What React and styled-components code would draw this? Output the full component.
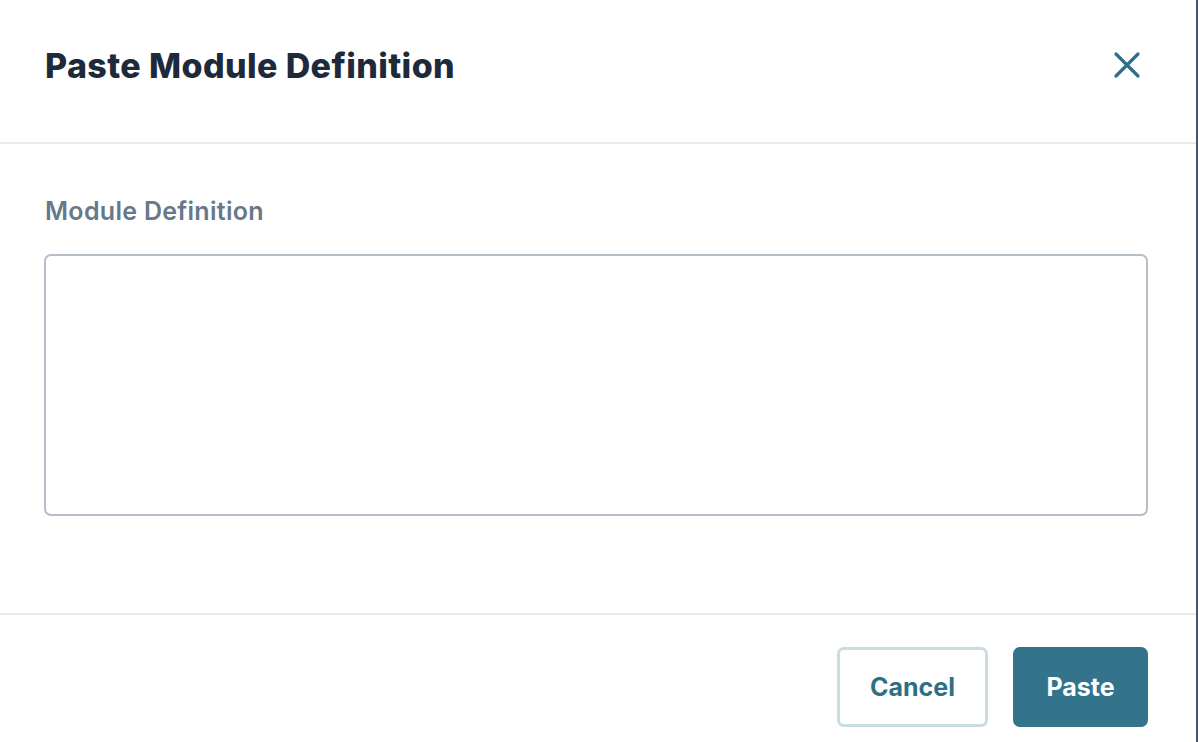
import React from "react";
import styled, { createGlobalStyle } from "styled-components";

const Global = createGlobalStyle`
  html, body { margin: 0; padding: 0; height: 100%; }
  body { background: #4a5566; font-family: "Inter", "Liberation Sans", sans-serif; }
  #root { height: 100%; }
`;

const Modal = styled.div`
  width: 1196px;
  height: 742px;
  background: #ffffff;
  display: flex;
  flex-direction: column;
  box-sizing: border-box;
`;

const Header = styled.header`
  height: 144px;
  flex: none;
  box-sizing: border-box;
  border-bottom: 2px solid #e8eaed;
  display: flex;
  align-items: center;
  justify-content: space-between;
  padding: 0 53px 12px 45px;
`;

const Title = styled.h1`
  margin: 0;
  font-family: "Inter", sans-serif;
  font-weight: 800;
  font-size: 34px;
  letter-spacing: 0.4px;
  color: #1e2a3a;
`;

const CloseButton = styled.button`
  border: none;
  background: none;
  padding: 0;
  width: 32px;
  height: 32px;
  display: flex;
  align-items: center;
  justify-content: center;
  color: #2f6f89;
  cursor: pointer;
`;

const Body = styled.div`
  flex: 1;
  padding: 52px 48px 0 44px;
  box-sizing: border-box;
  border-bottom: 2px solid #e8eaed;
  display: flex;
  flex-direction: column;
`;

const Label = styled.label`
  font-family: "Inter", sans-serif;
  font-weight: 600;
  font-size: 25px;
  letter-spacing: 0.3px;
  color: #67788a;
  margin-left: 1px;
  margin-bottom: 28px;
`;

const TextArea = styled.textarea`
  width: 100%;
  height: 262px;
  box-sizing: border-box;
  border: 2px solid #b4bec8;
  border-radius: 7px;
  resize: none;
  outline: none;
  font-family: "Inter", sans-serif;
  font-size: 20px;
  padding: 12px 16px;
`;

const Footer = styled.footer`
  height: 127px;
  flex: none;
  box-sizing: border-box;
  display: flex;
  justify-content: flex-end;
  align-items: flex-start;
  gap: 25px;
  padding: 32px 48px 0 0;
`;

const Button = styled.button`
  height: 80px;
  padding: 0 ${p => (p.primary ? "32px" : "30px")};
  min-width: ${p => (p.primary ? "135px" : "150px")};
  box-sizing: border-box;
  border-radius: 7px;
  font-family: "Inter", sans-serif;
  font-weight: 700;
  font-size: 25px;
  cursor: pointer;
  border: ${p => (p.primary ? "none" : "3px solid #c9dce3")};
  background: ${p => (p.primary ? "#33738c" : "#ffffff")};
  color: ${p => (p.primary ? "#ffffff" : "#2f6f86")};
`;

export default function App() {
  return (
    <>
      <Global />
      <Modal>
        <Header>
          <Title>Paste Module Definition</Title>
          <CloseButton aria-label="Close">
            <svg width="28" height="28" viewBox="0 0 28 28" fill="none" stroke="currentColor" strokeWidth="3.2" strokeLinecap="round">
              <path d="M3 3 L25 25 M25 3 L3 25" />
            </svg>
          </CloseButton>
        </Header>
        <Body>
          <Label>Module Definition</Label>
          <TextArea />
        </Body>
        <Footer>
          <Button>Cancel</Button>
          <Button primary>Paste</Button>
        </Footer>
      </Modal>
    </>
  );
}
